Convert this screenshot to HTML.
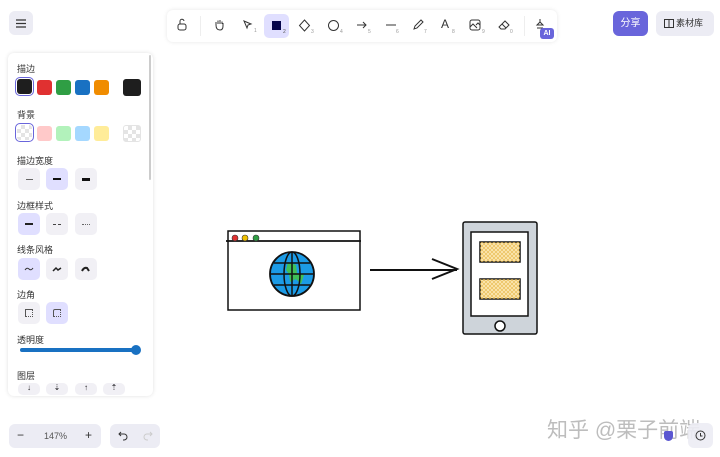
<!DOCTYPE html>
<html><head><meta charset="utf-8">
<style>
*{box-sizing:border-box;margin:0;padding:0}
body{width:720px;height:457px;overflow:hidden;background:#fff;font-family:"Liberation Sans","Noto Sans CJK SC",sans-serif;position:relative;color:#1b1b1f}
.abs{position:absolute}
.btn{position:absolute;background:#ececf4;border-radius:6px}
.lbl{position:absolute;left:17px;font-size:9px;color:#333}
.sw{position:absolute;width:15px;height:15px;border-radius:3px}
.ob{position:absolute;width:22px;height:22px;border-radius:5px;background:#f1f0f5;display:flex;align-items:center;justify-content:center}
.ob.on{background:#e0dfff}
.sub{position:absolute;font-size:5px;color:#999}
.chk{background-color:#fff;background-image:linear-gradient(45deg,#e4e4e4 25%,transparent 25%,transparent 75%,#e4e4e4 75%),linear-gradient(45deg,#e4e4e4 25%,transparent 25%,transparent 75%,#e4e4e4 75%);background-size:8px 8px;background-position:0 0,4px 4px}
</style></head><body>
<div class="btn" style="left:9px;top:11px;width:24px;height:24px;display:flex;align-items:center;justify-content:center">
<svg width="10" height="9"><path d="M0 1h10M0 4.5h10M0 8h10" stroke="#333" stroke-width="1.2"/></svg></div>
<div class="abs" style="left:167px;top:10px;width:390px;height:32px;background:#fff;border-radius:6px;box-shadow:0 0 4px rgba(0,0,0,.1)"></div>
<div class="abs" style="left:200px;top:16px;width:1px;height:20px;background:#eee"></div>
<div class="abs" style="left:524px;top:16px;width:1px;height:20px;background:#eee"></div>
<svg class="abs" style="left:176px;top:18px" width="12" height="14"><rect x="2" y="6" width="8" height="6" rx="2" fill="none" stroke="#333"/><path d="M4 6V3.5a2 2 0 0 1 4 -0.5" fill="none" stroke="#333"/></svg>
<svg class="abs" style="left:213px;top:18px" width="13" height="13"><path d="M3 7V4M5 6V2.5M7 6V2M9 6V3.5M3 7q0 5 4 5q3 0 3-4V5" fill="none" stroke="#333"/></svg>
<svg class="abs" style="left:243px;top:20px" width="10" height="10"><path d="M1 1l7 3-3 1-1 3z" fill="none" stroke="#333"/></svg>
<span class="sub" style="left:254px;top:28px">1</span>
<div class="abs" style="left:264px;top:14px;width:25px;height:24px;background:#e0dfff;border-radius:5px"></div>
<div class="abs" style="left:272px;top:21px;width:9px;height:9px;background:#06064c"></div>
<span class="sub" style="left:283px;top:29px;color:#555">2</span>
<svg class="abs" style="left:298px;top:19px" width="13" height="13"><path d="M6.5 1l5 5.5-5 5.5-5-5.5z" fill="none" stroke="#333"/></svg>
<span class="sub" style="left:311px;top:29px">3</span>
<svg class="abs" style="left:327px;top:19px" width="13" height="13"><circle cx="6.5" cy="6.5" r="5" fill="none" stroke="#333"/></svg>
<span class="sub" style="left:340px;top:29px">4</span>
<svg class="abs" style="left:356px;top:20px" width="12" height="10"><path d="M1 5h9M7 2l3 3-3 3" fill="none" stroke="#333"/></svg>
<span class="sub" style="left:368px;top:29px">5</span>
<svg class="abs" style="left:385px;top:20px" width="12" height="10"><path d="M1 5h10" stroke="#333"/></svg>
<span class="sub" style="left:396px;top:29px">6</span>
<svg class="abs" style="left:412px;top:19px" width="12" height="12"><path d="M2 10l1-3 6-6 2 2-6 6z" fill="none" stroke="#333"/></svg>
<span class="sub" style="left:424px;top:29px">7</span>
<span class="abs" style="left:441px;top:17px;font-size:12px;color:#333">A</span>
<span class="sub" style="left:452px;top:29px">8</span>
<svg class="abs" style="left:469px;top:19px" width="12" height="12"><rect x="1" y="1" width="10" height="10" rx="2" fill="none" stroke="#333"/><path d="M1 8l3-3 4 4M7 6l2-2 2 2" fill="none" stroke="#333"/></svg>
<span class="sub" style="left:482px;top:29px">9</span>
<svg class="abs" style="left:498px;top:19px" width="12" height="12"><path d="M3 10L1 8l6-6 4 4-4 4zM4 5l4 4" fill="none" stroke="#333"/></svg>
<span class="sub" style="left:510px;top:29px">0</span>
<svg class="abs" style="left:535px;top:18px" width="10" height="12"><path d="M5 1v3M2 7h6l-3-3zM2 10h6" fill="none" stroke="#333"/></svg>
<div class="abs" style="left:540px;top:28px;width:14px;height:11px;background:#6965db;border-radius:3px;color:#fff;font-size:7px;font-weight:bold;text-align:center;line-height:11px">AI</div>
<div class="abs" style="left:613px;top:11px;width:35px;height:25px;background:#6965db;border-radius:6px;color:#fff;font-size:10px;text-align:center;line-height:25px">分享</div>
<div class="abs" style="left:656px;top:11px;width:58px;height:25px;background:#ececf4;border-radius:6px;font-size:9px;line-height:25px;padding-left:20px;color:#333">素材库</div>
<svg class="abs" style="left:664px;top:19px" width="10" height="9"><path d="M0.5 0.5h9v8h-9zM5 0.5v8" fill="none" stroke="#333"/></svg>
<div class="abs" style="left:8px;top:53px;width:145px;height:343px;background:#fff;border-radius:6px;box-shadow:0 0 4px rgba(0,0,0,.12)"></div>
<div class="abs" style="left:149px;top:55px;width:2px;height:125px;background:#ccc;border-radius:1px"></div>
<div class="lbl" style="top:62px">描边</div>
<div class="sw" style="left:17px;top:79px;background:#1e1e1e;outline:1px solid #6965db;outline-offset:1px"></div>
<div class="sw" style="left:37px;top:80px;background:#e03131"></div>
<div class="sw" style="left:56px;top:80px;background:#2f9e44"></div>
<div class="sw" style="left:75px;top:80px;background:#1971c2"></div>
<div class="sw" style="left:94px;top:80px;background:#f08c00"></div>
<div class="sw" style="left:123px;top:79px;width:18px;height:17px;background:#1e1e1e"></div>
<div class="lbl" style="top:108px">背景</div>
<div class="sw chk" style="left:17px;top:125px;outline:1px solid #6965db;outline-offset:1px"></div>
<div class="sw" style="left:37px;top:126px;background:#ffc9c9"></div>
<div class="sw" style="left:56px;top:126px;background:#b2f2bb"></div>
<div class="sw" style="left:75px;top:126px;background:#a5d8ff"></div>
<div class="sw" style="left:94px;top:126px;background:#ffec99"></div>
<div class="sw chk" style="left:123px;top:125px;width:18px;height:17px;border:1px solid #e4e4e4"></div>
<div class="lbl" style="top:154px">描边宽度</div>
<div class="ob" style="left:18px;top:168px"><div style="width:7px;height:1px;background:#666"></div></div>
<div class="ob on" style="left:46px;top:168px"><div style="width:8px;height:2px;background:#111"></div></div>
<div class="ob" style="left:75px;top:168px"><div style="width:8px;height:3px;background:#111"></div></div>
<div class="lbl" style="top:199px">边框样式</div>
<div class="ob on" style="left:18px;top:213px"><div style="width:8px;height:1.5px;background:#222"></div></div>
<div class="ob" style="left:46px;top:213px"><div style="width:8px;border-top:1.5px dashed #444"></div></div>
<div class="ob" style="left:75px;top:213px"><div style="width:8px;border-top:1px dotted #666"></div></div>
<div class="lbl" style="top:243px">线条风格</div>
<div class="ob on" style="left:18px;top:258px"><svg width="10" height="6"><path d="M1 4q2-3 4-1t4-1" fill="none" stroke="#333"/></svg></div>
<div class="ob" style="left:46px;top:258px"><svg width="10" height="6"><path d="M1 5l3-3 2 2 3-2" fill="none" stroke="#222" stroke-width="1.5"/></svg></div>
<div class="ob" style="left:75px;top:258px"><svg width="10" height="6"><path d="M1 5q2-4 5-3l2 3" fill="none" stroke="#222" stroke-width="2"/></svg></div>
<div class="lbl" style="top:288px">边角</div>
<div class="ob" style="left:18px;top:302px"><div style="width:8px;height:8px;border:1px dotted #555;border-top-style:solid;border-left-style:solid"></div></div>
<div class="ob on" style="left:46px;top:302px"><div style="width:8px;height:8px;border:1px dotted #555;border-top-style:solid;border-left-style:solid;border-radius:2px 0 0 0"></div></div>
<div class="lbl" style="top:333px">透明度</div>
<div class="abs" style="left:20px;top:348px;width:117px;height:4px;background:#1971c2;border-radius:2px"></div>
<div class="abs" style="left:131px;top:345px;width:10px;height:10px;background:#1971c2;border-radius:50%"></div>
<div class="lbl" style="top:369px">图层</div>
<div class="ob" style="left:18px;top:383px;height:12px;align-items:flex-start;font-size:8px">↓</div>
<div class="ob" style="left:46px;top:383px;height:12px;align-items:flex-start;font-size:8px">⇣</div>
<div class="ob" style="left:75px;top:383px;height:12px;align-items:flex-start;font-size:8px">↑</div>
<div class="ob" style="left:103px;top:383px;height:12px;align-items:flex-start;font-size:8px">⇡</div>
<div class="abs" style="left:9px;top:424px;width:92px;height:24px;background:#ececf4;border-radius:6px;font-size:9px;color:#555">
<span class="abs" style="left:8px;top:4px;font-size:12px;color:#333">−</span>
<span class="abs" style="left:35px;top:7px">147%</span>
<span class="abs" style="left:76px;top:4px;font-size:12px;color:#333">+</span></div>
<div class="abs" style="left:110px;top:424px;width:50px;height:24px;background:#ececf4;border-radius:6px">
<svg class="abs" style="left:8px;top:7px" width="11" height="10"><path d="M3 1L1 3l2 2M1 3h5a3 3 0 0 1 0 6H5" fill="none" stroke="#333"/></svg>
<svg class="abs" style="left:32px;top:7px" width="11" height="10"><path d="M8 1l2 2-2 2M10 3H5a3 3 0 0 0 0 6h1" fill="none" stroke="#ccc"/></svg></div>
<svg class="abs" style="left:0;top:0" width="720" height="457">
<defs><pattern id="h" width="4" height="4" patternUnits="userSpaceOnUse"><path d="M0 4L4 0M0 0L4 4" stroke="#e8b84a" stroke-width=".6"/></pattern></defs>
<rect x="228" y="231" width="132" height="79" fill="#fff" stroke="#111" stroke-width="1.5"/>
<line x1="226" y1="241" x2="361" y2="241" stroke="#111" stroke-width="1.8"/>
<circle cx="235" cy="238" r="3" fill="#e03131" stroke="#333" stroke-width=".6"/>
<circle cx="245" cy="238" r="3" fill="#f0c000" stroke="#333" stroke-width=".6"/>
<circle cx="256" cy="238" r="3" fill="#2f9e44" stroke="#333" stroke-width=".6"/>
<circle cx="292" cy="274" r="22" fill="#1c9be6" stroke="#111" stroke-width="1.8"/>
<path d="M288 262l8 3 1 8 7 2-3 9-5-5-6 3-1-8-3-4z" fill="#40c057"/>
<ellipse cx="292" cy="274" rx="8" ry="22" fill="none" stroke="#111" stroke-width="1.5"/>
<line x1="292" y1="252" x2="292" y2="296" stroke="#111" stroke-width="1.5"/>
<path d="M270 274h44M274 263h36M274 285h36" stroke="#111" stroke-width="1.5"/>
<path d="M370 270h87M432 259l25 10-25 10" fill="none" stroke="#111" stroke-width="2"/>
<rect x="463" y="222" width="74" height="112" rx="2" fill="#ced4da" stroke="#111" stroke-width="1.5"/>
<rect x="471" y="232" width="57" height="84" fill="#fff" stroke="#111" stroke-width="1.5"/>
<rect x="480" y="242" width="40" height="20" fill="#fbe6b0" stroke="#111" stroke-width="1.5"/>
<rect x="480" y="242" width="40" height="20" fill="url(#h)"/>
<rect x="480" y="279" width="40" height="20" fill="#fbe6b0" stroke="#111" stroke-width="1.5"/>
<rect x="480" y="279" width="40" height="20" fill="url(#h)"/>
<circle cx="500" cy="326" r="5" fill="#fff" stroke="#111" stroke-width="1.5"/>
</svg>
<div class="abs" style="left:547px;top:414px;font-size:21px;color:#bdbdbd;white-space:nowrap">知乎 @栗子前端</div>
<div class="abs" style="left:688px;top:423px;width:25px;height:25px;background:#ececf4;border-radius:6px;opacity:.9"></div>
<svg class="abs" style="left:695px;top:430px" width="11" height="11"><circle cx="5.5" cy="5.5" r="4.5" fill="none" stroke="#333"/><path d="M5.5 3v3h2" fill="none" stroke="#333"/></svg>
<div class="abs" style="left:664px;top:431px;width:9px;height:10px;background:#5b57d1;border-radius:2px 2px 5px 5px"></div>
</body></html>
